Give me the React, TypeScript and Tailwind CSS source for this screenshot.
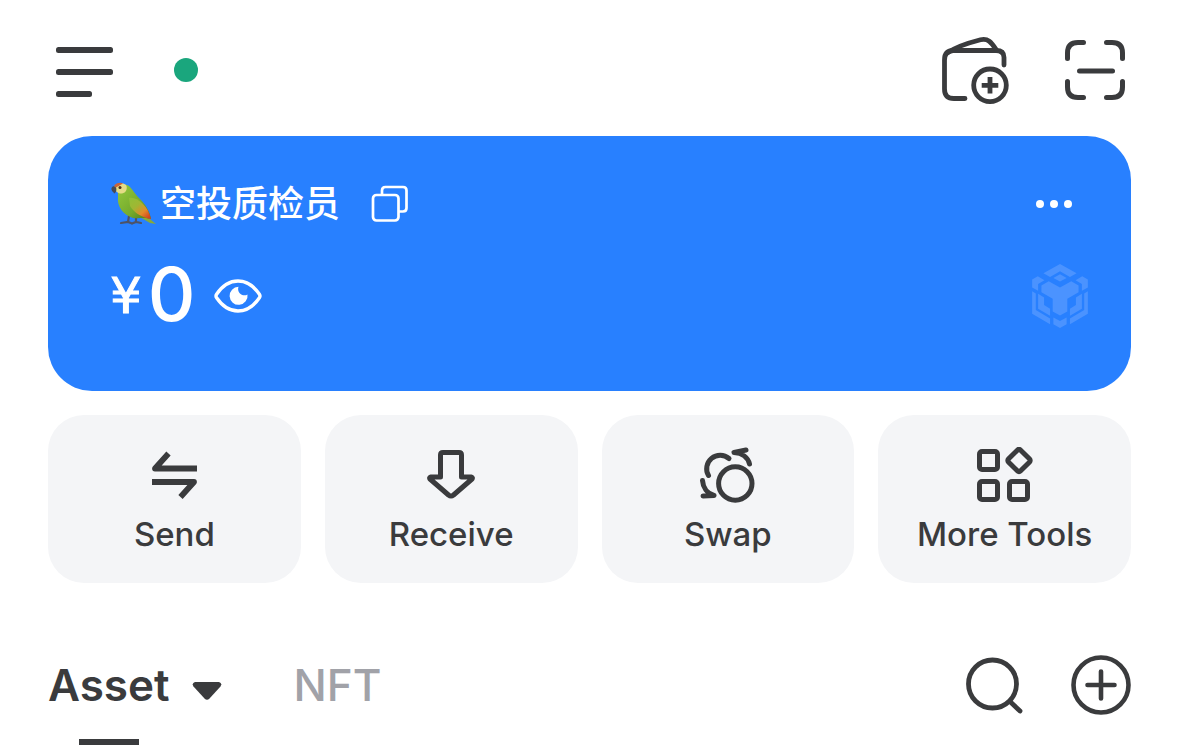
import type { ReactNode } from "react";

type Action = {
  label: string;
  icon: ReactNode;
};

function MenuIcon() {
  return (
    <svg width="57" height="56" viewBox="0 0 57 56" fill="currentColor" aria-hidden="true">
      <rect x="0" y="5" width="57" height="6" rx="2.5" />
      <rect x="0" y="27" width="57" height="6" rx="2.5" />
      <rect x="0" y="49" width="36" height="6" rx="2.5" />
    </svg>
  );
}

function WalletAddIcon() {
  return (
    <svg
      width="68"
      height="68"
      viewBox="0 0 68 68"
      fill="none"
      stroke="currentColor"
      strokeWidth="4.8"
      strokeLinecap="round"
      strokeLinejoin="round"
      aria-hidden="true"
    >
      <path d="M23 62.5H12Q2.5 62.5 2.5 53V24Q2.5 14.5 11.5 14.5H54Q62 14.5 62 21.5V29" />
      <path d="M6 16.5C14 11 28 6.5 38.5 3.8C46 2 49 6 54.5 14" />
      <circle cx="48" cy="49.3" r="16.3" />
      <path d="M48 41V57.6M39.7 49.3H56.3" strokeLinecap="butt" />
    </svg>
  );
}

function ScanIcon() {
  return (
    <svg
      width="60"
      height="60"
      viewBox="0 0 60 60"
      fill="none"
      stroke="currentColor"
      strokeWidth="5"
      strokeLinecap="round"
      aria-hidden="true"
    >
      <path d="M2.5 18.5V13Q2.5 2.5 13 2.5H18.5" />
      <path d="M41.5 2.5H47Q57.5 2.5 57.5 13V18.5" />
      <path d="M57.5 41.5V47Q57.5 57.5 47 57.5H41.5" />
      <path d="M18.5 57.5H13Q2.5 57.5 2.5 47V41.5" />
      <path d="M14.5 31H47.5" />
    </svg>
  );
}

function ParrotIcon() {
  return (
    <svg width="46" height="46" viewBox="0 0 46 46" role="img" aria-label="Parrot">
      <defs>
        <linearGradient id="parrot-body" x1="8" y1="10" x2="38" y2="38" gradientUnits="userSpaceOnUse">
          <stop offset="0%" stopColor="#8fc43a" />
          <stop offset="60%" stopColor="#74aa2c" />
          <stop offset="100%" stopColor="#4f7c1f" />
        </linearGradient>
        <linearGradient id="parrot-wing" x1="18" y1="14" x2="38" y2="37" gradientUnits="userSpaceOnUse">
          <stop offset="0%" stopColor="#8cc238" />
          <stop offset="45%" stopColor="#9fb733" />
          <stop offset="75%" stopColor="#e28a2a" />
          <stop offset="100%" stopColor="#d1441f" />
        </linearGradient>
      </defs>
      <path d="M30 30L46 43L40 42L28 35Z" fill="#87a93a" />
      <path
        d="M19 35L18 41M26 35L26 41M11 42L18 41L22 42.5M22 42.5L26 41L31 42"
        fill="none"
        stroke="#4d5367"
        strokeWidth="2.2"
        strokeLinecap="round"
      />
      <path
        d="M8 11C9 4 15 2 19 5C23 9 25 13 30 18C36 24 40 31 41 38C34 36 30 38 23 37C13 34 7 25 8 17Z"
        fill="url(#parrot-body)"
      />
      <path d="M19 17C26 15 38 24 41 38C33 37 24 32 20 25Z" fill="url(#parrot-wing)" />
      <path d="M4 6C6 2 13 1 16 4C18 7 16 12 12 12.5C8 13 5 10 4 6Z" fill="#e5dc86" />
      <path d="M4 5C6 1.5 11 1 13 2.5L6 6.5Z" fill="#c9643a" />
      <path d="M1.5 8.5C1 5.5 4 4 6 6.5C7 9 6 12 4 12.5C4 11 2 11 1.5 8.5Z" fill="#454a55" />
      <circle cx="10" cy="6.5" r="1.5" fill="#50301c" />
    </svg>
  );
}

function CopyIcon() {
  return (
    <svg width="38" height="38" viewBox="0 0 38 38" fill="none" stroke="currentColor" strokeWidth="2.7" aria-hidden="true">
      <rect x="2" y="10" width="25.5" height="25.5" rx="3.5" />
      <path d="M11 10V5.5Q11 2 14.5 2H32Q35.5 2 35.5 5.5V23Q35.5 26.5 32 26.5H27.5" />
    </svg>
  );
}

function EyeIcon() {
  return (
    <svg width="48" height="34" viewBox="0 0 48 34" aria-hidden="true">
      <path
        d="M2.6 15.2C8.5 6.5 16 2 24 2S39.5 6.5 45.4 15.2Q46.6 17 45.4 18.8C39.5 27.5 32 32 24 32S8.5 27.5 2.6 18.8Q1.4 17 2.6 15.2Z"
        fill="none"
        stroke="currentColor"
        strokeWidth="3.4"
      />
      <path d="M24.5 7.8A9 9 0 1 0 33.5 15.5C31 17 27.5 16.5 25.5 14C24 12 23.8 10 24.5 7.8Z" fill="currentColor" />
    </svg>
  );
}

function ChainLogo() {
  return (
    <svg width="56" height="64" viewBox="66 248 168 193" fill="#4b93ff" aria-hidden="true">
      <path d="M150 248L200 276L180 287L150 270L120 287L100 276Z" />
      <path d="M150 279L170 290L150 301L130 290Z" />
      <path d="M66 295L83 285L103 297L84 308V329L66 319Z" />
      <path d="M234 295L217 285L197 297L216 308V329L234 319Z" />
      <path d="M94 313L116 300L150 319L184 300L206 313V333L172 353V391L150 403L128 391V353L94 333Z" />
      <path d="M84 338L102 349V372L120 383V404L84 383Z" />
      <path d="M216 338L198 349V372L180 383V404L216 383Z" />
      <path d="M66 330L77 337V387L120 412V430L66 398Z" />
      <path d="M234 330L223 337V387L180 412V430L234 398Z" />
      <path d="M130 409L150 420L170 409V430L150 441L130 430Z" />
    </svg>
  );
}

function SendIcon() {
  return (
    <svg width="46" height="48" viewBox="0 0 46 48" fill="none" stroke="currentColor" strokeWidth="5.8" strokeLinejoin="round" aria-hidden="true">
      <path d="M46 17.5H4L17.5 2.5" />
      <path d="M1 31H43L29.5 46" />
    </svg>
  );
}

function ReceiveIcon() {
  return (
    <svg width="48" height="50" viewBox="0 0 48 50" fill="none" stroke="currentColor" strokeWidth="5" strokeLinejoin="round" aria-hidden="true">
      <path d="M13.5 5Q13.5 2.5 16 2.5H32Q34.5 2.5 34.5 5V27H44.5Q46 27.5 45 29L26.5 45Q24 47 21.5 45L3 29Q2 27.5 3.5 27H13.5Z" />
    </svg>
  );
}

function SwapIcon() {
  return (
    <svg
      width="56"
      height="56"
      viewBox="0 0 56 56"
      fill="none"
      stroke="currentColor"
      strokeWidth="5"
      strokeLinecap="round"
      strokeLinejoin="round"
      aria-hidden="true"
    >
      <circle cx="35.3" cy="36.5" r="16.7" />
      <path d="M8.5 28.5A13.5 13.5 0 0 1 29 11.5" />
      <path d="M46 3L34 5.5C42 6 48 10.5 49.5 17" />
      <path d="M2.5 33.5C3 40.5 7 46.5 14 48.5L3 49" />
    </svg>
  );
}

function ToolsIcon() {
  return (
    <svg width="56" height="56" viewBox="0 0 56 56" fill="none" stroke="currentColor" strokeWidth="5" aria-hidden="true">
      <rect x="2.5" y="4.5" width="18" height="18" rx="2.5" />
      <rect x="2.5" y="34.5" width="18" height="18" rx="2.5" />
      <rect x="32.5" y="34.5" width="18" height="18" rx="2.5" />
      <rect x="33.5" y="5" width="17" height="17" rx="2" transform="rotate(45 42 13.5)" />
    </svg>
  );
}

function SearchIcon() {
  return (
    <svg width="58" height="58" viewBox="0 0 58 58" fill="none" stroke="currentColor" strokeWidth="4.8" strokeLinecap="round" aria-hidden="true">
      <circle cx="27.5" cy="28" r="24" />
      <path d="M45.5 46L55 55" />
    </svg>
  );
}

function AddIcon() {
  return (
    <svg width="60" height="60" viewBox="0 0 60 60" fill="none" stroke="currentColor" strokeWidth="4.6" strokeLinecap="round" aria-hidden="true">
      <circle cx="30" cy="30" r="27.5" />
      <path d="M30 16.5V43.5M16.5 30H43.5" />
    </svg>
  );
}

const ACTIONS: Action[] = [
  { label: "Send", icon: <SendIcon /> },
  { label: "Receive", icon: <ReceiveIcon /> },
  { label: "Swap", icon: <SwapIcon /> },
  { label: "More Tools", icon: <ToolsIcon /> },
];

function Header() {
  return (
    <header className="flex h-[136px] items-center justify-between pt-1 pr-1.5 pl-2">
      <div className="flex items-center gap-[61px]">
        <button type="button" aria-label="Menu" className="block">
          <MenuIcon />
        </button>
        <span className="size-6 rounded-full bg-[#1aa67d]" />
      </div>
      <div className="flex items-center gap-[55px]">
        <button type="button" aria-label="Add wallet" className="block">
          <WalletAddIcon />
        </button>
        <button type="button" aria-label="Scan" className="block">
          <ScanIcon />
        </button>
      </div>
    </header>
  );
}

function BalanceCard() {
  return (
    <section className="rounded-[44px] bg-[#2880ff] pt-10 pr-[43px] pb-[55px] pl-[62px] text-white">
      <div className="flex h-14 items-center justify-between">
        <div className="flex items-center">
          <ParrotIcon />
          <h1 className="ml-1 text-[36px] leading-[56px] font-medium">空投质检员</h1>
          <button type="button" aria-label="Copy address" className="ml-[31px]">
            <CopyIcon />
          </button>
        </div>
        <button type="button" aria-label="More options" className="mr-4 flex h-8 items-center gap-1.5">
          <span className="size-2 rounded-full bg-white" />
          <span className="size-2 rounded-full bg-white" />
          <span className="size-2 rounded-full bg-white" />
        </button>
      </div>
      <div className="mt-6 flex h-20 items-center justify-between">
        <div className="flex items-center">
          <p className="flex items-center">
            <span className="font-['DejaVu_Sans',sans-serif] text-[50px] leading-[80px] [-webkit-text-stroke:1px_white]">¥</span>
            <span className="ml-1.5 pb-1 text-[74px] leading-[76px] font-medium">0</span>
          </p>
          <button type="button" aria-label="Hide balance" className="ml-[18px]">
            <EyeIcon />
          </button>
        </div>
        <ChainLogo />
      </div>
    </section>
  );
}

function ActionTile({ label, icon }: Action) {
  return (
    <button type="button" className="flex flex-col items-center rounded-[36px] bg-[#f4f5f7] pt-8 pb-[29px]">
      <span className="flex h-14 items-center">{icon}</span>
      <span className="mt-[11px] text-[33px] leading-10 font-medium">{label}</span>
    </button>
  );
}

function AssetBar() {
  return (
    <div className="mt-[74px] flex items-start justify-between">
      <div className="flex items-start text-[44px] leading-[56px]">
        <button type="button" className="flex flex-col items-center font-semibold">
          Asset
          <span className="mt-[26px] h-1.5 w-[60px] bg-[#3a3b3d]" />
        </button>
        <button type="button" aria-label="Choose asset type" className="ml-[22px] flex h-14 items-center pt-3">
          <svg width="30" height="20" viewBox="0 0 30 20" fill="currentColor" aria-hidden="true">
            <path d="M3 1H27Q30.5 2 28.5 5.5L17.5 17.5Q15 20 12.5 17.5L1.5 5.5Q-0.5 2 3 1Z" />
          </svg>
        </button>
        <button type="button" className="ml-[72px] font-medium text-[#a1a2a8]">
          NFT
        </button>
      </div>
      <div className="flex h-14 items-center gap-12">
        <button type="button" aria-label="Search" className="block">
          <SearchIcon />
        </button>
        <button type="button" aria-label="Add asset" className="block">
          <AddIcon />
        </button>
      </div>
    </div>
  );
}

export default function App() {
  return (
    <main className="bg-white pr-[47px] pb-2 pl-12 font-['Inter','Noto_Sans_CJK_SC',sans-serif] text-[#3a3b3d]">
      <Header />
      <BalanceCard />
      <nav aria-label="Wallet actions" className="mt-6 grid grid-cols-4 gap-6">
        {ACTIONS.map((action) => (
          <ActionTile key={action.label} label={action.label} icon={action.icon} />
        ))}
      </nav>
      <AssetBar />
    </main>
  );
}
